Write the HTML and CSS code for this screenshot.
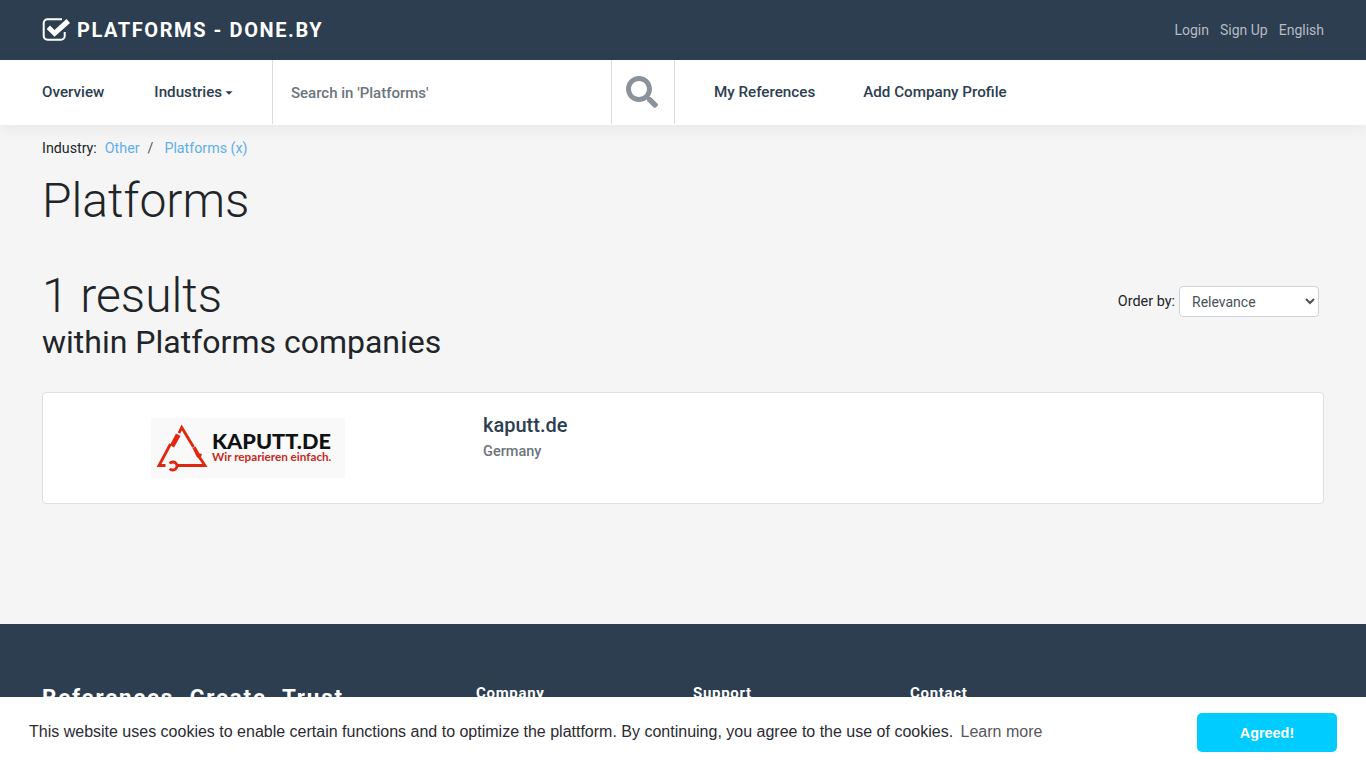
FILE: index.html
```html
<!DOCTYPE html>
<html lang="en">
<head>
<meta charset="utf-8">
<title>Platforms - done.by</title>
<link rel="stylesheet" href="styles.css">
</head>
<body>
<header class="topbar">
  <a class="brand" href="#">
    <svg class="brand-icon" viewBox="0 0 29 24" width="29" height="24" aria-hidden="true">
      <path d="M22.700 14V18a3.700 3.700 0 0 1-3.700 3.700H5.400a3.700 3.700 0 0 1-3.700-3.700V5a3.700 3.700 0 0 1 3.700-3.700H20" fill="none" stroke="#fff" stroke-width="2"/>
      <path d="M4.700 11L8 7.500l4.500 4.500L24.500 1 28 5 12.500 18.700z" fill="#fff"/>
    </svg>
    <span>PLATFORMS - DONE.BY</span>
  </a>
  <nav class="toplinks">
    <a href="#">Login</a>
    <a href="#">Sign Up</a>
    <a href="#">English</a>
  </nav>
</header>

<div class="subnav">
  <div class="subnav-left">
    <a class="navlink" href="#">Overview</a>
    <a class="navlink" href="#">Industries<i class="caret"></i></a>
  </div>
  <div class="search-text">Search in 'Platforms'</div>
  <div class="search-btn">
    <svg viewBox="0 0 512 512" width="32" height="32" aria-hidden="true">
      <path fill="#8a939b" d="M505 442.700L405.300 343c-4.500-4.500-10.600-7-17-7H372c27.600-35.300 44-79.700 44-128C416 93.100 322.900 0 208 0S0 93.100 0 208s93.100 208 208 208c48.300 0 92.700-16.400 128-44v16.300c0 6.400 2.500 12.500 7 17l99.700 99.700c9.400 9.400 24.600 9.400 33.900 0l28.300-28.300c9.400-9.400 9.400-24.600.1-34zM208 336c-70.700 0-128-57.200-128-128 0-70.700 57.200-128 128-128 70.700 0 128 57.200 128 128 0 70.700-57.200 128-128 128z"/>
    </svg>
  </div>
  <div class="subnav-right">
    <a class="navlink" href="#">My References</a>
    <a class="navlink" href="#">Add Company Profile</a>
  </div>
</div>

<main class="content">
  <div class="crumbs">
    <span>Industry:</span>
    <a href="#">Other</a>
    <span class="sep">/</span>
    <a href="#">Platforms (x)</a>
  </div>
  <h1 class="title">Platforms</h1>

  <section class="results-head">
    <div>
      <div class="count">1 results</div>
      <h2 class="within">within Platforms companies</h2>
    </div>
    <div class="order">
      <label for="order">Order by:</label>
      <select id="order" class="order-select"><option>Relevance</option></select>
    </div>
  </section>

  <article class="card">
    <div class="card-logo">
      <div class="logo-box">
        <svg class="logo-mark" viewBox="0 0 54 50" width="54" height="50" aria-hidden="true">
          <g fill="none" stroke="#e0260f" stroke-width="2.800">
            <path d="M9.500 42.500H3L14.500 21"/>
            <path d="M23 10L25.700 4.500L37.500 24"/>
            <path d="M44 35L49 42.500H20"/>
            <path d="M13.800 40.500A4 4 0 1 1 13.800 45.500"/>
          </g>
          <path d="M14 22L20 10.500L24.500 13L18 24.500z" fill="#e0260f"/>
          <path d="M36.500 25L39.500 23.500L43.500 30.500L46 31L44 37L40.500 33.500z" fill="#e0260f"/>
        </svg>
        <div class="logo-text">
          <div class="logo-name">KAPUTT.DE</div>
          <div class="logo-tag">Wir reparieren einfach.</div>
        </div>
      </div>
    </div>
    <div class="card-body">
      <a class="company" href="#">kaputt.de</a>
      <div class="country">Germany</div>
    </div>
  </article>
</main>

<footer class="footer">
  <div class="foot-brand">References. Create. Trust.</div>
  <div class="foot-col">Company</div>
  <div class="foot-col">Support</div>
  <div class="foot-col">Contact</div>
</footer>

<div class="cookie">
  <span class="cookie-msg">This website uses cookies to enable certain functions and to optimize the plattform. By continuing, you agree to the use of cookies. <a href="#">Learn more</a></span>
  <a class="cookie-btn" href="#">Agreed!</a>
</div>
</body>
</html>
```

FILE: styles.css
```css
* { box-sizing: border-box; }
html, body { margin: 0; padding: 0; height: 768px; overflow: hidden; }
body { background: #f5f5f5; font-family: Roboto, "Liberation Sans", sans-serif; font-size: 14.400px; color: #212529; }
a { text-decoration: none; color: inherit; }

.topbar { height: 60px; background: #2c3e50; display: flex; align-items: center; justify-content: space-between; padding: 0 42px; }
.brand { display: flex; align-items: center; gap: 6px; color: #fff; font-size: 20px; font-weight: 700; letter-spacing: 1.570px; }
.brand-icon { display: block; }
.toplinks { display: flex; gap: 11px; font-size: 14px; color: #b4bcc4; }

.subnav { position: relative; height: 65px; background: #fff; display: flex; box-shadow: 0 4px 16px rgba(0,0,0,.06); padding-bottom: 1px; }
.subnav-left { width: 273px; display: flex; align-items: center; gap: 50px; padding-left: 42px; border-right: 1px solid #dcdcdc; }
.navlink { font-size: 15.200px; font-weight: 500; color: #2c3e50; white-space: nowrap; }
.caret { display: inline-block; margin-left: 3px; vertical-align: 2px; border-top: 4px solid #2c3e50; border-left: 4px solid transparent; border-right: 4px solid transparent; transform: scale(.9); }
.search-text { width: 339px; padding: 2px 0 0 18px; display: flex; align-items: center; font-size: 15px; font-weight: 500; color: #6c757d; border-right: 1px solid #dcdcdc; }
.search-btn { width: 63px; display: flex; align-items: center; justify-content: center; padding-right: 2px; border-right: 1px solid #dcdcdc; }
.subnav-right { display: flex; align-items: center; gap: 48px; padding-left: 39px; }

.content { padding: 0 42px; height: 499px; }
.crumbs { display: flex; gap: 8px; padding-top: 14px; line-height: 18px; font-size: 14.250px; }
.crumbs a { color: #62aeea; }
.crumbs .sep { margin-right: 3px; color: #555; }
.title { margin: 15px 0 0; font-size: 48px; font-weight: 300; line-height: 58px; }
.results-head { display: flex; justify-content: space-between; align-items: flex-start; margin-top: 37px; padding-right: 5px; }
.count { font-size: 48px; font-weight: 300; line-height: 58px; }
.within { margin: -2px 0 0; font-size: 32px; font-weight: 400; line-height: 38px; }
.order { display: flex; align-items: center; gap: 4px; margin-top: 19px; }
.order-select { width: 140px; height: 31px; padding: 0 8px; background: #fff; border: 1px solid #ced4da; border-radius: 4px; font: 14px Roboto, sans-serif; color: #495057; }

.card { display: flex; margin-top: 31px; height: 112px; background: #fff; border: 1px solid #dfdfdf; border-radius: 4px; }
.card-logo { width: 440px; padding: 25px 0 0 108px; }
.logo-box { width: 194px; height: 60px; background: #f9f9f9; display: flex; align-items: center; gap: 2px; padding-left: 5px; }
.logo-mark { flex: none; }
.logo-text { font-family: Lato, sans-serif; margin-top: -3px; }
.logo-name { font-size: 21.700px; font-weight: 900; line-height: 20px; color: #111; }
.logo-tag { font-size: 11.700px; font-weight: 700; line-height: 11px; color: #c9281a; white-space: nowrap; }
.card-body { padding-top: 19px; }
.company { display: block; font-size: 20px; font-weight: 500; line-height: 26px; color: #2c3e50; }
.country { font-size: 14.500px; font-weight: 500; line-height: 27px; color: #6c757d; }

.footer { height: 144px; background: #2c3e50; color: #fff; display: flex; align-items: flex-start; padding: 59px 42px 0; font-weight: 700; overflow: hidden; }
.foot-brand { width: 434px; font-size: 22.400px; letter-spacing: 1.790px; line-height: 28px; white-space: nowrap; }
.foot-col { width: 217px; font-size: 15px; letter-spacing: .7px; line-height: 20px; }

.cookie { position: fixed; left: 0; right: 0; bottom: 0; height: 71px; background: #fff; display: flex; align-items: center; justify-content: space-between; padding: 0 29px; font-family: "Liberation Sans", Arial, sans-serif; font-size: 16px; color: #2b2b33; }
.cookie-msg { margin-top: -2px; }
.cookie-msg a { color: #2b2b33; opacity: .8; margin-left: 3px; }
.cookie-btn { width: 140px; height: 39px; background: #00ccff; border-radius: 5px; color: #fff; font-size: 14.400px; font-weight: 700; display: flex; align-items: center; justify-content: center; }
```
